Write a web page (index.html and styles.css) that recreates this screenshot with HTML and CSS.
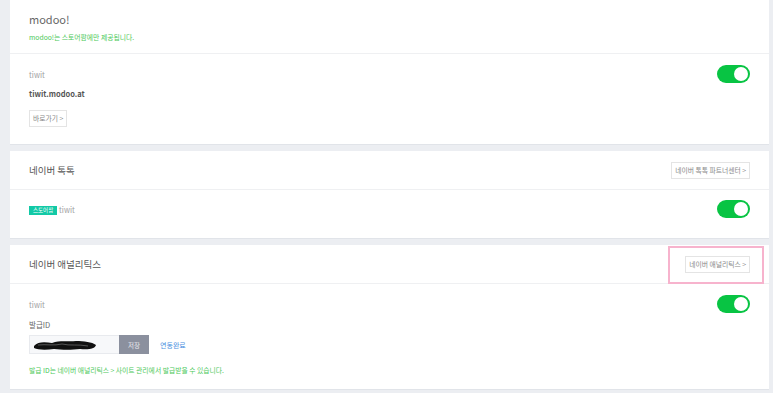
FILE: index.html
```html
<!DOCTYPE html>
<html>
<head>
<meta charset="utf-8">
<meta name='viewport' content='width=device-width,initial-scale=1.0'/>
<title>채널 연동</title>
<link rel="stylesheet" href="styles.css">
</head>
<body>

<section class="card">
    <div class="card-head head-tall">
        <div class="head-title big">modoo!</div>
        <div class="note">modoo!는 스토어팜에만 제공됩니다.</div>
    </div>
    <div class="card-body body-modoo">
        <div class="row">
            <span class="shop">tiwit</span>
            <label class="toggle on"><span class="knob"></span></label>
        </div>
        <div class="url">tiwit.modoo.at</div>
        <a class="btn btn-go" href="#">바로가기 &gt;</a>
    </div>
</section>

<section class="card">
    <div class="card-head">
        <div class="head-title">네이버 톡톡</div>
        <a class="btn" href="#">네이버 톡톡 파트너센터 &gt;</a>
    </div>
    <div class="card-body body-talk">
        <div class="row">
            <span><span class="badge">스토어팜</span> <span class="shop">tiwit</span></span>
            <label class="toggle on"><span class="knob"></span></label>
        </div>
    </div>
</section>

<section class="card">
    <div class="card-head">
        <div class="head-title">네이버 애널리틱스</div>
        <span class="highlight"><a class="btn" href="#">네이버 애널리틱스 &gt;</a></span>
    </div>
    <div class="card-body body-analytics">
        <div class="row">
            <span class="shop">tiwit</span>
            <label class="toggle on"><span class="knob"></span></label>
        </div>
        <div class="field-label">발급ID</div>
        <div class="id-row">
            <div class="id-input">
                <svg width="66" height="14" viewBox="0 0 66 14">
                    <path d="M2 8 C6 3 14 4 20 5 C28 2 36 4 44 3 C52 3 60 4 64 7 C63 11 56 12 48 11 C40 12 30 12 22 11 C14 12 6 12 2 10 Z" fill="#111"/>
                    <path d="M6 7 C14 6 22 8 30 6 C38 8 46 6 56 8" stroke="#666" stroke-width="0.8" fill="none"/>
                </svg>
            </div>
            <button class="btn-save">저장</button>
            <a class="linked" href="#">연동완료</a>
        </div>
        <div class="note note-bottom">발급 ID는 네이버 애널리틱스 &gt; 사이트 관리에서 발급받을 수 있습니다.</div>
    </div>
</section>

</body>
</html>
```

FILE: styles.css
```css
body {
    margin: 0;
    padding: 0 4px 0 10px;
    background: #eceef2;
    font-family: "Noto Sans CJK KR", "Noto Sans", sans-serif;
    color: #333;
    font-size: 8px;
}

a {
    text-decoration: none;
}

.card {
    background: #fff;
    border-bottom: 1px solid #e1e4e9;
    margin-bottom: 6px;
}

.card-head {
    display: flex;
    align-items: center;
    justify-content: space-between;
    height: 38px;
    padding: 0 19px;
    border-bottom: 1px solid #eff0f2;
}

.head-tall {
    display: block;
    height: auto;
    padding: 12px 19px 10px;
}

.head-title {
    font-size: 9.5px;
    line-height: 14px;
    color: #555;
}

.head-title.big {
    font-size: 11px;
    color: #666;
}

.note {
    font-size: 6.8px;
    line-height: 12px;
    color: #4cc95a;
    margin-top: 5px;
}

.card-body {
    padding: 0 19px;
}

.body-modoo {
    padding-top: 11px;
    padding-bottom: 17px;
}

.body-talk {
    padding-top: 10px;
    padding-bottom: 20px;
}

.body-analytics {
    padding-top: 11px;
    padding-bottom: 13px;
}

.row {
    display: flex;
    align-items: center;
    justify-content: space-between;
    height: 18px;
}

.shop {
    font-size: 7.5px;
    color: #a0a0a0;
}

.url {
    margin-top: 5px;
    line-height: 12px;
    font-size: 7.5px;
    font-weight: bold;
    color: #555;
}

.btn {
    display: inline-block;
    height: 15px;
    line-height: 15px;
    padding: 0 3px;
    border: 1px solid #e4e4e4;
    font-size: 6.8px;
    color: #888;
    background: #fff;
    white-space: nowrap;
}

.btn-go {
    margin-top: 10px;
}

.highlight {
    position: relative;
}

/* pink annotation box around the analytics button */
.highlight::after {
    content: "";
    position: absolute;
    left: -17px;
    right: -14px;
    top: -10px;
    bottom: -11px;
    border: 2px solid #f7b3cd;
}

.badge {
    display: inline-block;
    background: #12c9a6;
    color: #fff;
    font-size: 5.5px;
    line-height: 9px;
    padding: 0 4px;
    vertical-align: 1px;
}

.toggle {
    position: relative;
    width: 33px;
    height: 18px;
    border-radius: 9px;
    background: #ccc;
}

.toggle.on {
    background: #08c443;
}

.knob {
    position: absolute;
    top: 2px;
    left: 2px;
    width: 14px;
    height: 14px;
    border-radius: 50%;
    background: #fff;
}

.toggle.on .knob {
    left: 17px;
}

.field-label {
    margin-top: 6px;
    line-height: 12px;
    font-size: 7.5px;
    color: #666;
}

.id-row {
    display: flex;
    align-items: center;
    margin-top: 4px;
    height: 19px;
}

.id-input {
    box-sizing: border-box;
    width: 90px;
    height: 19px;
    border: 1px solid #e8eaee;
    border-right: 0;
    background: #f7f8fa;
    display: flex;
    align-items: center;
    padding-left: 2px;
}

.btn-save {
    width: 30px;
    height: 19px;
    border: 0;
    padding: 0;
    background: #8b909e;
    color: #e8e9ee;
    font-family: inherit;
    font-size: 6.5px;
}

.linked {
    margin-left: 11px;
    font-size: 7px;
    color: #4a8fe0;
}

.note-bottom {
    margin-top: 10px;
}
```
